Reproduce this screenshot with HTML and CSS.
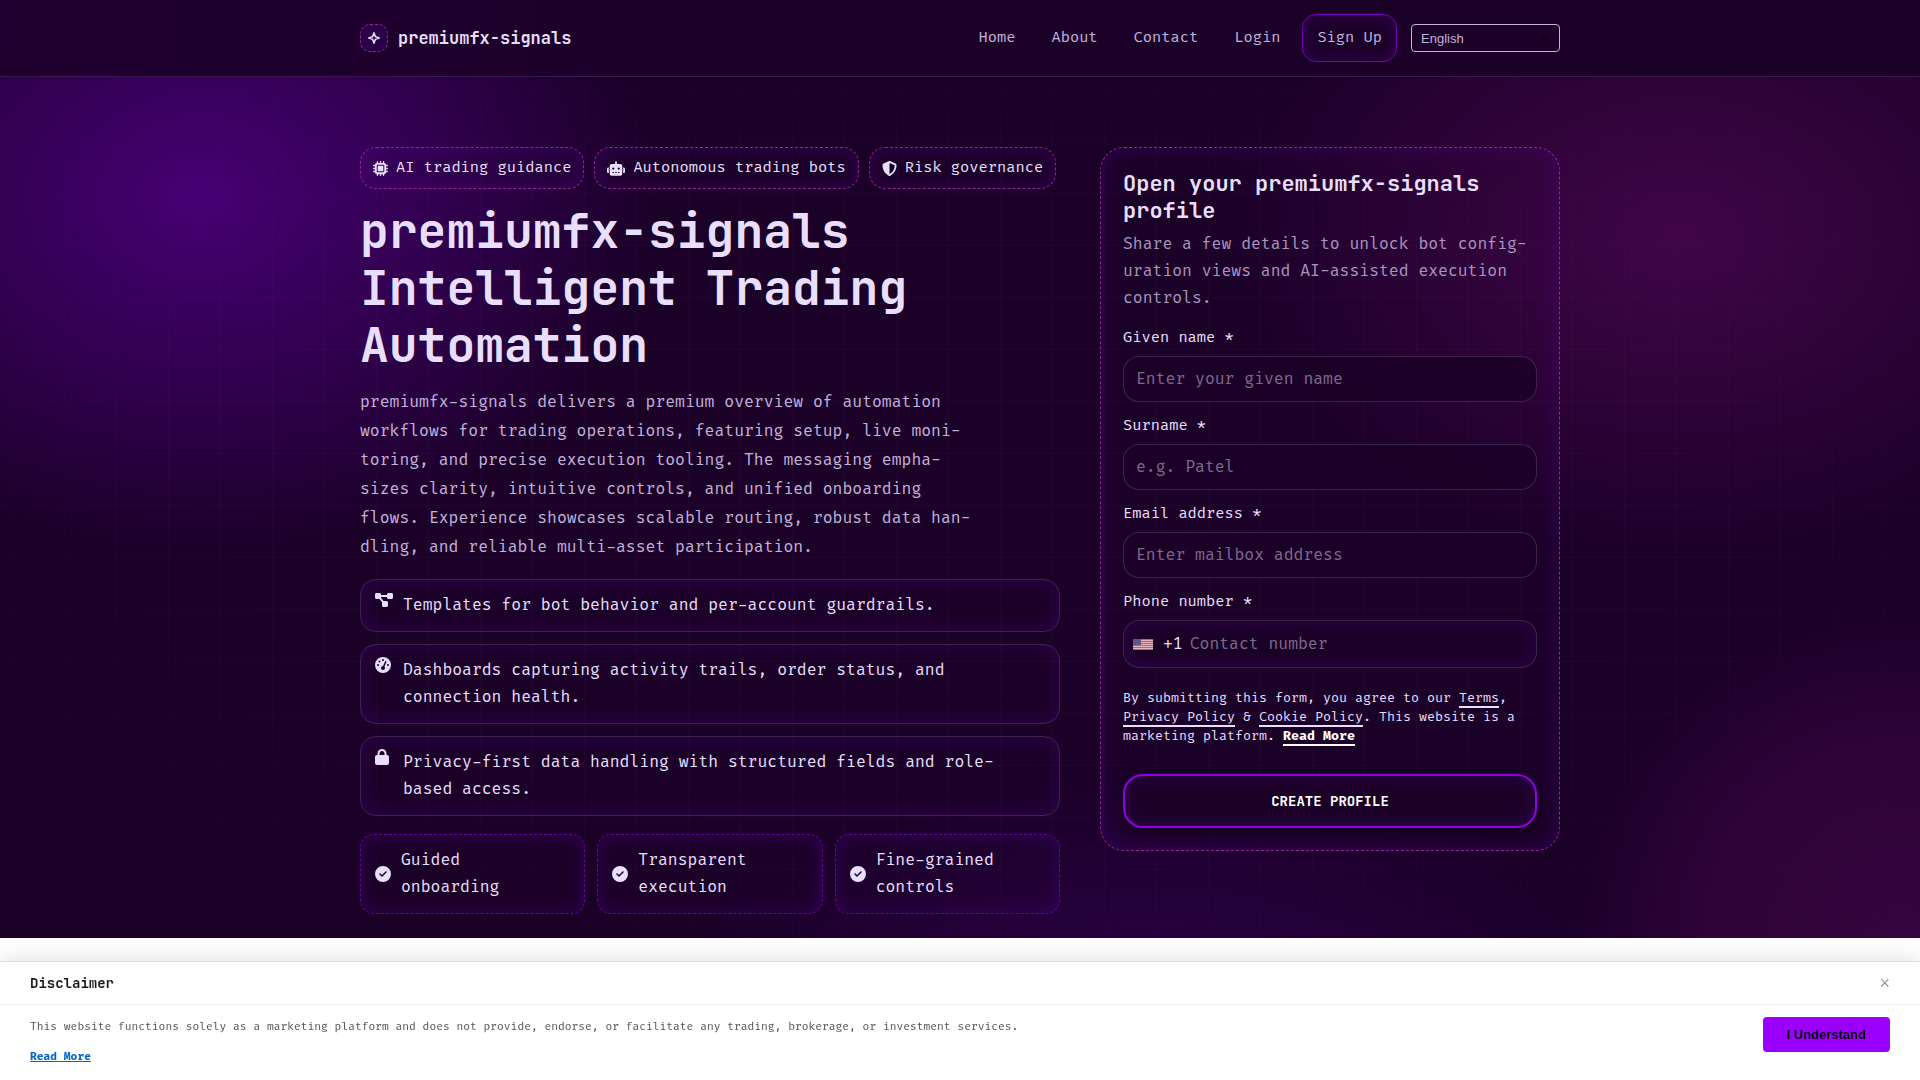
FILE: index.html
```html
<!DOCTYPE html>
<html lang="en">
<head>
  <meta charset="UTF-8">
  <meta name="viewport" content="width=device-width, initial-scale=1">
  <title>premiumfx-signals</title>
  <link rel="stylesheet" href="styles.css">
</head>
<body>
  <header class="site-header">
    <div class="container header-inner">
      <a href="#" class="brand">
        <span class="brand-mark">
          <svg viewBox="0 0 12 12" width="12" height="12"><path d="M6 1L7.400 4.600L11 6L7.400 7.400L6 11L4.600 7.400L1 6L4.600 4.600Z" fill="none" stroke="#e8dfff" stroke-width="1.500"/></svg>
        </span>
        <span>premiumfx-signals</span>
      </a>
      <nav class="nav">
        <a href="#">Home</a>
        <a href="#">About</a>
        <a href="#">Contact</a>
        <a href="#">Login</a>
        <a href="#" class="nav-cta">Sign Up</a>
        <div class="lang">
          <select aria-label="Language">
            <option>English</option>
          </select>
          <svg class="lang-arrow" viewBox="0 0 10 6" width="8" height="5"><path d="M1 1l4 4 4-4" fill="none" stroke="#0a0010" stroke-width="2"/></svg>
        </div>
      </nav>
    </div>
  </header>

  <main class="hero">
    <div class="container hero-grid">
      <section class="hero-copy">
        <div class="chips">
          <span class="chip">
            <svg viewBox="0 0 512 512" width="15" height="15"><path fill-rule="evenodd" d="M176 24c0-13.3-10.7-24-24-24s-24 10.7-24 24V64c-35.3 0-64 28.7-64 64H24c-13.3 0-24 10.7-24 24s10.7 24 24 24H64v56H24c-13.3 0-24 10.7-24 24s10.7 24 24 24H64v56H24c-13.3 0-24 10.7-24 24s10.7 24 24 24H64c0 35.3 28.7 64 64 64v40c0 13.3 10.7 24 24 24s24-10.7 24-24V448h56v40c0 13.3 10.7 24 24 24s24-10.7 24-24V448h56v40c0 13.3 10.7 24 24 24s24-10.7 24-24V448c35.3 0 64-28.7 64-64h40c13.3 0 24-10.7 24-24s-10.7-24-24-24H448V280h40c13.3 0 24-10.7 24-24s-10.7-24-24-24H448V176h40c13.3 0 24-10.7 24-24s-10.7-24-24-24H448c0-35.3-28.7-64-64-64V24c0-13.3-10.7-24-24-24s-24 10.7-24 24V64H280V24c0-13.3-10.7-24-24-24s-24 10.7-24 24V64H176V24zM160 128H352c17.7 0 32 14.3 32 32V352c0 17.7-14.3 32-32 32H160c-17.7 0-32-14.3-32-32V160c0-17.7 14.3-32 32-32zm192 32H160V352H352V160z"/></svg>
            AI trading guidance
          </span>
          <span class="chip">
            <svg viewBox="0 0 640 512" width="18" height="15"><path fill-rule="evenodd" d="M320 0c17.7 0 32 14.3 32 32V96H472c39.8 0 72 32.2 72 72V440c0 39.8-32.2 72-72 72H168c-39.8 0-72-32.2-72-72V168c0-39.8 32.2-72 72-72H288V32c0-17.7 14.3-32 32-32zM208 384c-8.8 0-16 7.2-16 16s7.2 16 16 16h32c8.8 0 16-7.2 16-16s-7.2-16-16-16H208zm96 0c-8.8 0-16 7.2-16 16s7.2 16 16 16h32c8.8 0 16-7.2 16-16s-7.2-16-16-16H304zm96 0c-8.8 0-16 7.2-16 16s7.2 16 16 16h32c8.8 0 16-7.2 16-16s-7.2-16-16-16H400zM264 256a40 40 0 1 0 -80 0 40 40 0 1 0 80 0zm152 40a40 40 0 1 0 0-80 40 40 0 1 0 0 80zM48 224H64V416H48c-26.5 0-48-21.5-48-48V272c0-26.5 21.5-48 48-48zm544 0c26.5 0 48 21.5 48 48v96c0 26.5-21.5 48-48 48H576V224h16z"/></svg>
            Autonomous trading bots
          </span>
          <span class="chip">
            <svg viewBox="0 0 512 512" width="15" height="15"><path fill-rule="evenodd" d="M256 0c4.6 0 9.2 1 13.4 2.9L457.7 82.8c22 9.3 38.4 31 38.3 57.2c-.5 99.2-41.3 280.7-213.6 363.2c-16.7 8-36.1 8-52.8 0C57.3 420.7 16.5 239.2 16 140c-.1-26.2 16.3-47.9 38.3-57.2L242.7 2.9C246.8 1 251.4 0 256 0zm0 66.8V444.8C394 378 431.1 230.1 432 141.4L256 66.8z"/></svg>
            Risk governance
          </span>
        </div>

        <h1>premiumfx-signals Intelligent Trading Automation</h1>
        <p class="lead">premiumfx-signals delivers a premium overview of automation workflows for trading operations, featuring setup, live moni&shy;toring, and precise execution tooling. The messaging empha&shy;sizes clarity, intuitive controls, and unified onboarding flows. Experience showcases scalable routing, robust data han&shy;dling, and reliable multi-asset participation.</p>

        <ul class="features">
          <li>
            <span class="feature-icon"><svg viewBox="0 0 576 512" width="18" height="16"><path d="M0 80C0 53.5 21.5 32 48 32h96c26.5 0 48 21.5 48 48V96H384V80c0-26.5 21.5-48 48-48h96c26.5 0 48 21.5 48 48v96c0 26.5-21.5 48-48 48H432c-26.5 0-48-21.5-48-48V160H192v16c0 1.7-.1 3.4-.3 5L272 288h96c26.5 0 48 21.5 48 48v96c0 26.5-21.5 48-48 48H272c-26.5 0-48-21.5-48-48V336c0-1.7 .1-3.4 .3-5L144 224H48c-26.5 0-48-21.5-48-48V80z"/></svg></span>
            <p>Templates for bot behavior and per-account guardrails.</p>
          </li>
          <li>
            <span class="feature-icon"><svg viewBox="0 0 512 512" width="16" height="16"><path fill-rule="evenodd" d="M0 256a256 256 0 1 1 512 0A256 256 0 1 1 0 256zM288 96a32 32 0 1 0 -64 0 32 32 0 1 0 64 0zM256 416c35.3 0 64-28.7 64-64c0-17.4-6.9-33.1-18.1-44.6L366 161.7c5.3-12.1-.2-26.3-12.3-31.6s-26.3 .2-31.6 12.3L257.9 288c-.6 0-1.3 0-1.9 0c-35.3 0-64 28.7-64 64s28.7 64 64 64zM176 144a32 32 0 1 0 -64 0 32 32 0 1 0 64 0zM96 288a32 32 0 1 0 0-64 32 32 0 1 0 0 64zm352-32a32 32 0 1 0 -64 0 32 32 0 1 0 64 0z"/></svg></span>
            <p>Dashboards capturing activity trails, order status, and connection health.</p>
          </li>
          <li>
            <span class="feature-icon"><svg viewBox="0 0 448 512" width="14" height="16"><path fill-rule="evenodd" d="M144 144v48H304V144c0-44.2-35.8-80-80-80s-80 35.8-80 80zM80 192V144C80 64.5 144.5 0 224 0s144 64.5 144 144v48h16c35.3 0 64 28.7 64 64V448c0 35.3-28.7 64-64 64H64c-35.3 0-64-28.7-64-64V256c0-35.3 28.7-64 64-64H80z"/></svg></span>
            <p>Privacy-first data handling with structured fields and role-based access.</p>
          </li>
        </ul>

        <div class="tiles">
          <div class="tile">
            <svg viewBox="0 0 512 512" width="16" height="16"><path fill-rule="evenodd" d="M256 512A256 256 0 1 0 256 0a256 256 0 1 0 0 512zM369 209L241 337c-9.4 9.4-24.6 9.4-33.9 0l-64-64c-9.4-9.4-9.4-24.6 0-33.9s24.6-9.4 33.9 0l47 47L335 175c9.4-9.4 24.6-9.4 33.9 0s9.4 24.6 0 33.9z"/></svg>
            <span>Guided onboarding</span>
          </div>
          <div class="tile">
            <svg viewBox="0 0 512 512" width="16" height="16"><path fill-rule="evenodd" d="M256 512A256 256 0 1 0 256 0a256 256 0 1 0 0 512zM369 209L241 337c-9.4 9.4-24.6 9.4-33.9 0l-64-64c-9.4-9.4-9.4-24.6 0-33.9s24.6-9.4 33.9 0l47 47L335 175c9.4-9.4 24.6-9.4 33.9 0s9.4 24.6 0 33.9z"/></svg>
            <span>Transparent execution</span>
          </div>
          <div class="tile">
            <svg viewBox="0 0 512 512" width="16" height="16"><path fill-rule="evenodd" d="M256 512A256 256 0 1 0 256 0a256 256 0 1 0 0 512zM369 209L241 337c-9.4 9.4-24.6 9.4-33.9 0l-64-64c-9.4-9.4-9.4-24.6 0-33.9s24.6-9.4 33.9 0l47 47L335 175c9.4-9.4 24.6-9.4 33.9 0s9.4 24.6 0 33.9z"/></svg>
            <span>Fine-grained controls</span>
          </div>
        </div>
      </section>

      <form class="signup">
        <h2>Open your premiumfx-signals profile</h2>
        <p class="signup-intro">Share a few details to unlock bot config&shy;uration views and AI-assisted execution controls.</p>

        <div class="fields">
          <div class="field">
            <label for="fname">Given name *</label>
            <input type="text" id="fname" placeholder="Enter your given name">
          </div>
          <div class="field">
            <label for="lname">Surname *</label>
            <input type="text" id="lname" placeholder="e.g. Patel">
          </div>
          <div class="field">
            <label for="email">Email address *</label>
            <input type="email" id="email" placeholder="Enter mailbox address">
          </div>
          <div class="field">
            <label for="phone">Phone number *</label>
            <div class="phone">
              <svg class="flag" viewBox="0 0 20 11" width="20" height="11">
                <rect width="20" height="11" fill="#e3b4bd"/>
                <path d="M0 .5h20M0 2.5h20M0 4.5h20M0 6.5h20M0 8.5h20M0 10.5h20" stroke="#cf5a6c"/>
                <rect width="8" height="6" fill="#5c5689"/>
              </svg>
              <span>+1</span>
              <input type="tel" id="phone" placeholder="Contact number">
            </div>
          </div>
        </div>

        <p class="legal">By submitting this form, you agree to our <a href="#">Terms</a>, <a href="#">Privacy Policy</a> &amp; <a href="#">Cookie Policy</a>. This website is a marketing platform. <a href="#" class="more">Read More</a></p>
        <button type="submit" class="submit">CREATE PROFILE</button>
      </form>
    </div>
  </main>

  <div class="disclaimer">
    <div class="disclaimer-head">
      <h4>Disclaimer</h4>
      <button type="button" class="close" aria-label="Close">×</button>
    </div>
    <div class="disclaimer-body">
      <div>
        <p>This website functions solely as a marketing platform and does not provide, endorse, or facilitate any trading, brokerage, or investment services.</p>
        <a href="#">Read More</a>
      </div>
      <button type="button" class="accept">I Understand</button>
    </div>
  </div>
</body>
</html>
```
FILE: styles.css
```css
:root {
  --bg: #1b0028;
  --text: #e8dfff;
  --muted: #c3b2dc;
  --line: rgba(232, 223, 255, 0.16);
  --magenta: #a0209c;
  --violet: #8f00e6;
  --glow: rgba(90, 0, 160, 0.32);
  --body-font: "Fira Code", "DejaVu Sans Mono", monospace;
  --head-font: "JetBrains Mono", "DejaVu Sans Mono", monospace;
}
* {
  box-sizing: border-box;
}
body {
  margin: 0;
  background: #fff;
  color: var(--text);
  font-family: var(--body-font);
  font-size: 16px;
  line-height: 27px;
}
h1, h2, h4, p, ul {
  margin: 0;
  padding: 0;
}
h1, h2, h4 {
  font-family: var(--head-font);
  font-weight: 700;
}
svg {
  flex: none;
  fill: currentColor;
}
input, button, select {
  font: inherit;
}
.container {
  max-width: 1200px;
  margin: 0 auto;
}

/* header */
.site-header {
  background: linear-gradient(100deg, #200030, #1b0028 40%);
  border-bottom: 1px solid #37194a;
}
.header-inner {
  display: flex;
  align-items: center;
  justify-content: space-between;
  padding: 14px 0;
}
.brand {
  display: flex;
  align-items: center;
  gap: 10px;
  color: var(--text);
  font-family: var(--head-font);
  font-size: 17px;
  font-weight: 700;
  text-decoration: none;
}
.brand-mark {
  display: flex;
  align-items: center;
  justify-content: center;
  width: 28px;
  height: 28px;
  border: 1px dashed var(--magenta);
  border-radius: 10px;
  background: #2a0048;
}
.nav {
  display: flex;
  align-items: center;
  gap: 8px;
}
.nav a {
  padding: 0 14px;
  color: var(--muted);
  font-size: 15px;
  line-height: 46px;
  text-decoration: none;
}
.nav .nav-cta {
  border: 1px solid #7600c0;
  border-radius: 14px;
  box-shadow: inset 0 0 18px rgba(96, 0, 170, 0.3);
}
.lang {
  position: relative;
  display: flex;
  margin-left: 6px;
}
.lang select {
  width: 149px;
  height: 28px;
  padding: 0 9px;
  border: 1px solid var(--muted);
  border-radius: 4px;
  background: transparent;
  color: var(--muted);
  font-family: "Liberation Sans", Arial, sans-serif;
  font-size: 13px;
  appearance: none;
}
.lang-arrow {
  position: absolute;
  top: 12px;
  right: 11px;
  pointer-events: none;
}

/* hero */
.hero {
  position: relative;
  padding: 70px 0 24px;
  background:
    radial-gradient(ellipse 460px 360px at 200px 120px, rgba(84, 0, 140, 0.75), rgba(84, 0, 140, 0.4) 50%, transparent),
    radial-gradient(ellipse 460px 330px at 1680px 160px, rgba(80, 8, 85, 0.7), rgba(80, 8, 85, 0.35) 50%, transparent),
    radial-gradient(ellipse 330px 330px at 1900px 860px, rgba(80, 8, 85, 0.5), rgba(80, 8, 85, 0.35) 60%, transparent),
    radial-gradient(ellipse 480px 240px at 1150px 930px, rgba(66, 0, 116, 0.4), transparent),
    var(--bg);
}
/* faint grid behind the content */
.hero::before {
  content: "";
  position: absolute;
  inset: 0;
  background:
    linear-gradient(90deg, rgba(232, 223, 255, 0.025) 1px, transparent 1px) 12px 12px / 52px 52px,
    linear-gradient(rgba(232, 223, 255, 0.025) 1px, transparent 1px) 12px 12px / 52px 52px;
  mask-image: radial-gradient(ellipse at center, #000 50%, transparent 100%);
}
.hero-grid {
  position: relative;
  display: grid;
  grid-template-columns: 700fr 460fr;
  gap: 40px;
  align-items: start;
}
.hero-copy {
  display: flex;
  flex-direction: column;
}
.chips {
  display: flex;
  flex-wrap: wrap;
  gap: 10px;
}
.chip {
  display: flex;
  align-items: center;
  gap: 8px;
  padding: 8px 12px;
  border: 1px dashed var(--magenta);
  border-radius: 16px;
  box-shadow: inset 0 0 20px var(--glow);
  font-size: 15px;
  line-height: 24px;
}
h1 {
  margin-top: 13px;
  font-size: 48px;
  line-height: 57px;
}
.lead {
  max-width: 616px;
  margin-top: 15px;
  color: var(--muted);
  line-height: 29px;
}
.features {
  display: flex;
  flex-direction: column;
  gap: 12px;
  margin-top: 17px;
  list-style: none;
}
.features li {
  display: flex;
  gap: 10px;
  padding: 12px 14px;
  border: 1px solid var(--line);
  border-radius: 16px;
  box-shadow: inset 0 0 20px var(--glow);
}
.features p {
  max-width: 62ch;
}
.feature-icon {
  width: 18px;
  line-height: 12px;
}
.tiles {
  display: grid;
  grid-template-columns: repeat(3, 1fr);
  gap: 12px;
  margin-top: 18px;
}
.tile {
  display: flex;
  align-items: center;
  gap: 10px;
  padding: 12px 14px;
  border: 1px dashed #6a00ad;
  border-radius: 14px;
  box-shadow: inset 0 0 20px var(--glow);
}
.tile span {
  max-width: 14ch;
}

/* sign up form */
.signup {
  padding: 22px;
  border: 1px dashed var(--magenta);
  border-radius: 24px;
  box-shadow: inset 0 0 24px var(--glow);
}
.signup h2 {
  font-size: 22px;
  line-height: 27px;
}
.signup-intro {
  margin-top: 7px;
  color: #a994c0;
}
.fields {
  display: flex;
  flex-direction: column;
  gap: 12px;
  margin-top: 14px;
}
.field {
  display: flex;
  flex-direction: column;
  gap: 6px;
}
.field label {
  font-size: 15px;
  line-height: 24px;
}
.field input {
  width: 100%;
  height: 46px;
  padding: 0 12px;
  border: 1px solid var(--line);
  border-radius: 16px;
  background: rgba(26, 0, 38, 0.8);
  color: var(--text);
}
.field input::placeholder {
  color: #80688f;
}
.field .phone {
  display: flex;
  align-items: center;
  height: 48px;
  padding: 0 9px;
  border: 1px solid var(--line);
  border-radius: 16px;
  background: rgba(26, 0, 38, 0.8);
  box-shadow: inset 0 0 20px var(--glow);
}
.phone .flag {
  margin-right: 10px;
}
.field .phone input {
  flex: 1;
  height: 40px;
  padding: 0 7px;
  border: 0;
  background: none;
}
.legal {
  margin-top: 21px;
  font-size: 13px;
  line-height: 19px;
}
.legal a {
  color: var(--text);
  text-decoration: underline 2px;
  text-decoration-skip-ink: none;
  text-underline-offset: 4px;
}
.legal .more {
  color: #fff;
  font-weight: 700;
}
.submit {
  width: 100%;
  height: 54px;
  margin-top: 28px;
  border: 2px solid var(--violet);
  border-radius: 20px;
  background: #1b0026;
  box-shadow: inset 0 0 20px var(--glow), 0 8px 16px rgba(15, 0, 24, 0.5);
  color: #fff;
  font-family: var(--head-font);
  font-size: 14px;
  font-weight: 700;
}

/* disclaimer bar */
.disclaimer {
  position: fixed;
  right: 0;
  bottom: 0;
  left: 0;
  border-top: 1px solid #ddd;
  background: #fff;
  box-shadow: 0 -4px 20px rgba(0, 0, 0, 0.1);
  color: #555;
}
.disclaimer-head {
  display: flex;
  align-items: center;
  justify-content: space-between;
  padding: 10px 30px;
  border-bottom: 1px solid #eee;
}
.disclaimer-head h4 {
  color: #1a1a1a;
  font-size: 14px;
  font-weight: 600;
  line-height: 22px;
}
.close {
  padding: 0;
  border: 0;
  background: none;
  color: #999;
  font-family: "Liberation Sans", Arial, sans-serif;
  font-size: 18px;
  line-height: 22px;
}
.disclaimer-body {
  display: flex;
  align-items: flex-start;
  justify-content: space-between;
  padding: 12px 30px 13px;
  font-size: 11px;
  line-height: 20px;
}
.disclaimer-body a {
  display: inline-block;
  margin-top: 10px;
  color: #0066cc;
  font-weight: 700;
}
.accept {
  padding: 0 24px;
  border: 0;
  border-radius: 4px;
  background: #9b00ff;
  color: #000;
  font-family: "Liberation Sans", Arial, sans-serif;
  font-size: 13px;
  font-weight: 700;
  line-height: 35px;
}
```
